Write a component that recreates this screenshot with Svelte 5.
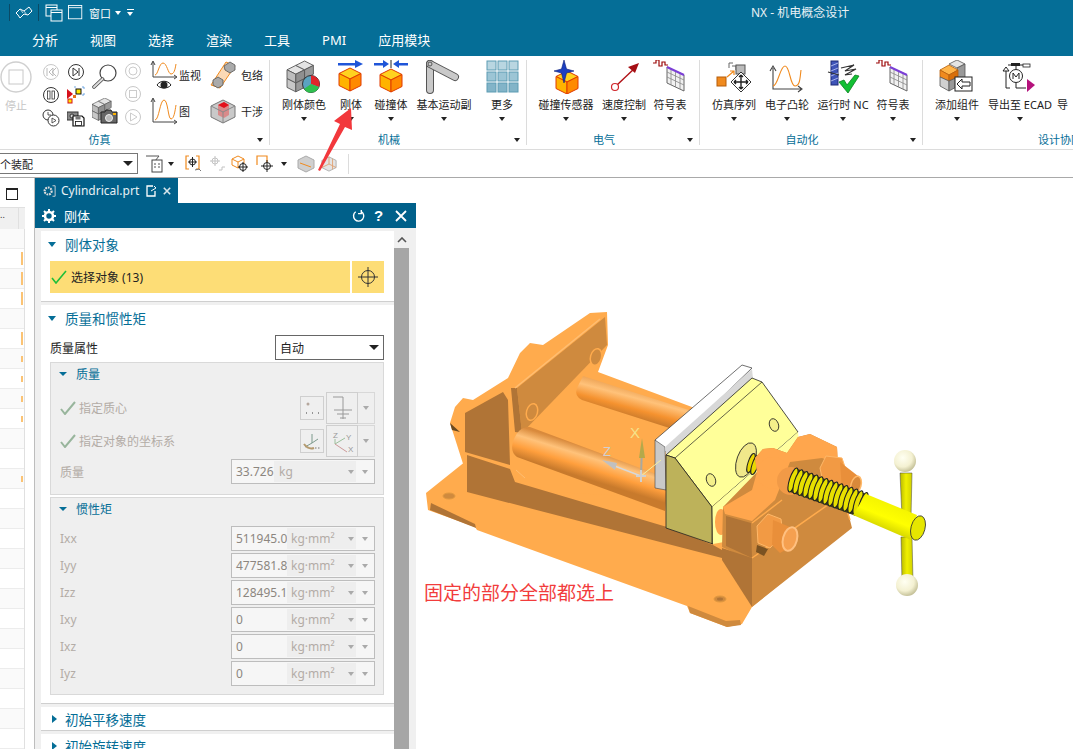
<script>
  const tabs = ['分析', '视图', '选择', '渲染', '工具', 'PMI', '应用模块']

  const groups = [
    { label: '机械', width: 257, pad: 9, items: [
      { label: '刚体颜色', w: 50, icon: 'blockColor' },
      { label: '刚体', w: 44, icon: 'rigid' },
      { label: '碰撞体', w: 36, icon: 'collide' },
      { label: '基本运动副', w: 70, icon: 'joint' },
      { label: '更多', w: 46, icon: 'grid' }
    ] },
    { label: '电气', width: 173, pad: 4, items: [
      { label: '碰撞传感器', w: 70, icon: 'sensor' },
      { label: '速度控制', w: 46, icon: 'speed' },
      { label: '符号表', w: 46, icon: 'table' }
    ] },
    { label: '自动化', width: 223, pad: 4, items: [
      { label: '仿真序列', w: 60, icon: 'sequence' },
      { label: '电子凸轮', w: 46, icon: 'cam' },
      { label: '运行时 NC', w: 66, icon: 'nc' },
      { label: '符号表', w: 34, icon: 'table' }
    ] },
    { label: '设计协同', width: 274, pad: 5, last: true, items: [
      { label: '添加组件', w: 58, icon: 'addPart' },
      { label: '导出至 ECAD', w: 68, icon: 'ecad' },
      { label: '导', w: 30, icon: 'none', plain: true }
    ] }
  ]

  const inertia = [
    { name: 'Ixx', value: '511945.0' },
    { name: 'Iyy', value: '477581.8' },
    { name: 'Izz', value: '128495.1' },
    { name: 'Ixy', value: '0' },
    { name: 'Ixz', value: '0' },
    { name: 'Iyz', value: '0' }
  ]

  // 左侧表格的行，mark 为右端的橙色标记高度
  const rows = [0, 13, 13, 13, 0, 13, 6, 6, 6, 6, 0, 0, 6, 0, 0, 0, 0, 0, 0, 0, 0, 0, 0, 0, 0, 0]

  const threads = Array.from({ length: 15 }, (_, i) => ({ x: 793 + i * 5, y: 480 + i * 1.75 }))
</script>

{#snippet cube(x, y, s)}
  <g transform="translate({x} {y}) scale({s})">
    <path d="M11 0 22 5.500 11 11 0 5.500Z" fill="#ffd21f" stroke="#e03a00" stroke-width="1" />
    <path d="M0 5.500 11 11V23L0 17.500Z" fill="#ffb300" stroke="#e03a00" stroke-width="1" />
    <path d="M22 5.500 11 11V23L22 17.500Z" fill="#ff8a00" stroke="#e03a00" stroke-width="1" />
  </g>
{/snippet}

{#snippet greyBlocks(x, y, s)}
  <g transform="translate({x} {y}) scale({s})" stroke="#555" stroke-width=".8">
    <path d="M0 8 8 4 16 8 8 12Z" fill="#e4e4e4" /><path d="M0 8 8 12V20L0 16Z" fill="#bdbdbd" /><path d="M16 8 8 12V20L16 16Z" fill="#8f8f8f" />
    <path d="M8 4 16 0 24 4 16 8Z" fill="#e4e4e4" /><path d="M24 4 16 8V16L24 12Z" fill="#999" />
    <path d="M0 16 8 20V28L0 24Z" fill="#c8c8c8" /><path d="M16 16 8 20V28L16 24Z" fill="#9a9a9a" />
  </g>
{/snippet}

{#snippet tableIcon()}
  <path d="M1 3H4V0H7V6H10V2H13V5H16" fill="none" stroke="#9c0a0a" stroke-width="1.200" />
  <path d="M15 7 32 15V31L15 23Z" fill="#f1f1f1" stroke="#666" />
  <path d="M19 9V25M23.500 11V27M28 13V29M15 12 32 20M15 17 32 25" stroke="#888" stroke-width=".8" fill="none" />
  <path d="M15 7 32 15" stroke="#7b3fd6" stroke-width="2" />
{/snippet}

{#snippet bigIcon(name)}
  <svg class="big" viewBox="0 0 36 34" width="36" height="34">
    {#if name === 'blockColor'}
      {@render greyBlocks(1, 1, 1.1)}
      <circle cx="25" cy="24" r="8.500" fill="#5ba3c0" stroke="#333" />
      <path d="M25 24V15.500A8.500 8.500 0 0 1 33 27Z" fill="#e0262b" />
      <path d="M25 24 33 27A8.500 8.500 0 0 1 18 29Z" fill="#2fbf4f" />
    {:else if name === 'rigid'}
      <path d="M5 3H22V0L30 4 22 8V5.500H5Z" fill="#1f55d8" />
      {@render cube(6, 8, 1)}
    {:else if name === 'collide'}
      <path d="M1 3H10V0L16 4 10 8V5.500H1ZM35 3H26V0L20 4 26 8V5.500H35Z" fill="#1f55d8" />
      <path d="M18 0V8" stroke="#222" />
      {@render cube(7, 9, 1)}
    {:else if name === 'joint'}
      <path d="M4 4 V30" stroke="#555" stroke-width="8" stroke-linecap="round" />
      <path d="M4 4 V30" stroke="#c9c9c9" stroke-width="6" stroke-linecap="round" />
      <path d="M4 4 29 17" stroke="#555" stroke-width="8" stroke-linecap="round" />
      <path d="M4 4 29 17" stroke="#c9c9c9" stroke-width="6" stroke-linecap="round" />
      <circle cx="4" cy="4" r="2" fill="none" stroke="#555" />
    {:else if name === 'grid'}
      <g stroke="#5d9cb3">
        <rect x="3" y="1" width="9" height="9" fill="#b9d6e1" /><rect x="14" y="1" width="9" height="9" fill="#b9d6e1" /><rect x="25" y="1" width="9" height="9" fill="#b9d6e1" />
        <rect x="3" y="12" width="9" height="9" fill="#9cc5d5" /><rect x="14" y="12" width="9" height="9" fill="#9cc5d5" /><rect x="25" y="12" width="9" height="9" fill="#9cc5d5" />
        <rect x="3" y="23" width="9" height="9" fill="#82b4c8" /><rect x="14" y="23" width="9" height="9" fill="#82b4c8" /><rect x="25" y="23" width="9" height="9" fill="#82b4c8" />
      </g>
    {:else if name === 'sensor'}
      {@render cube(8, 11, 1)}
      <path d="M16 0 18.500 9 26 11 18.500 13 16 23 13.500 13 6 11 13.500 9Z" fill="#1c3fc0" stroke="#0c1f78" stroke-width=".6" />
    {:else if name === 'speed'}
      <path d="M11 25 30 7" stroke="#b01116" stroke-width="1.400" />
      <path d="M33 3 22 7 29 13Z" fill="#a50f14" />
      <circle cx="9" cy="27" r="3.500" fill="#fff" stroke="#d0262b" stroke-width="1.200" />
    {:else if name === 'table'}
      {@render tableIcon()}
    {:else if name === 'sequence'}
      <rect x="1" y="17" width="9" height="9" fill="#f08a1e" stroke="#b55d0a" />
      <path d="M11 17 18 11M14 11H18V15" fill="none" stroke="#f08a1e" stroke-width="1.200" />
      <path d="M13 3H17M13 3V8M16 6H20V10" fill="none" stroke="#666" />
      <rect x="20" y="5" width="9" height="9" fill="#bbb" stroke="#555" />
      <path d="M25 12 35 22 25 32 15 22Z" fill="#fff" stroke="#333" />
      <path d="M25 15V29M18 22H32M25 15 23 17M25 15 27 17M25 29 23 27M25 29 27 27M18 22 20 20M18 22 20 24M32 22 30 20M32 22 30 24" stroke="#222" stroke-width="1.400" fill="none" />
    {:else if name === 'cam'}
      <path d="M4 8V29H32M1 11 4 6 7 11M29 26 33 29 29 32" fill="none" stroke="#444" stroke-width="1.100" />
      <path d="M4 26C9 26 11 6 16 6S21 26 26 26 31 18 32 10" fill="none" stroke="#f08a1e" stroke-width="1.100" />
    {:else if name === 'nc'}
      <rect x="6" y="1" width="7" height="24" fill="#3f54b8" stroke="#1c2a77" />
      <path d="M6 6 13 3M6 11 13 8M6 16 13 13M6 21 13 18" stroke="#a9b5ea" />
      <path d="M16 8 29 5 20 11 31 9 20 15 27 14M3 12 14 15" fill="none" stroke="#333" stroke-width="1.200" />
      <path d="M14 22 19 20 22 25 30 15 34 16 23 33Z" fill="#12c034" stroke="#0b7d20" stroke-width=".8" />
    {:else if name === 'addPart'}
      <g transform="translate(1 0)">
        <path d="M9 4 17 0 25 4 17 8Z" fill="#e4e4e4" stroke="#555" stroke-width=".8" /><path d="M25 4 17 8V22L25 18Z" fill="#999" stroke="#555" stroke-width=".8" />
        <path d="M0 10 9 5 18 10 9 15Z" fill="#ffb54a" stroke="#b55d0a" stroke-width=".8" /><path d="M0 10 9 15V21L0 17Z" fill="#f08a1e" stroke="#b55d0a" stroke-width=".8" /><path d="M18 10 9 15V21L18 17Z" fill="#d86f0a" stroke="#b55d0a" stroke-width=".8" />
        <path d="M0 17 9 21V31L0 26Z" fill="#d0d0d0" stroke="#555" stroke-width=".8" /><path d="M18 17 9 21V31L18 26Z" fill="#999" stroke="#555" stroke-width=".8" />
      </g>
      <rect x="16" y="17" width="17" height="14" fill="#fff" stroke="#222" />
      <path d="M18 24 23 19V22H31V26H23V29Z" fill="#fff" stroke="#222" />
    {:else if name === 'ecad'}
      <path d="M6 5H27" stroke="#222" /><rect x="9" y="3" width="9" height="3" fill="#222" /><rect x="21" y="4" width="7" height="3" fill="#fff" stroke="#222" stroke-width=".8" />
      <path d="M4 7 7 11H1ZM4 11V28M14 5V9M14 23V28M4 28H8M14 28H24" fill="none" stroke="#222" />
      <circle cx="14" cy="16" r="6.500" fill="#fff" stroke="#222" />
      <path d="M11 19V13L14 17 17 13V19" fill="none" stroke="#222" />
      <path d="M25 19 33 25 25 32Z" fill="#b5127c" />
    {/if}
  </svg>
{/snippet}

{#snippet miniCircle(shape)}
  <svg viewBox="0 0 18 18" width="18" height="18">
    <circle cx="9" cy="9" r="7.500" fill="#fff" stroke={shape === 'r' || shape === 'sq' || shape === 'pl' || shape === 'rew' ? '#c8c8c8' : '#333'} />
    {#if shape === 'rew'}
      <path d="M5 5V13M11 5 7 9 11 13ZM14 5 10 9 14 13" fill="none" stroke="#bbb" />
    {:else if shape === 'fwd'}
      <path d="M6 5 11 9 6 13ZM12 5V13" fill="none" stroke="#333" />
    {:else if shape === 'pause'}
      <rect x="5.500" y="5" width="2.500" height="8" fill="#fff" stroke="#333" stroke-width=".8" /><rect x="10" y="5" width="2.500" height="8" fill="#fff" stroke="#333" stroke-width=".8" />
    {:else if shape === 'r'}
      <circle cx="9" cy="9" r="4" fill="none" stroke="#ccc" />
    {:else if shape === 'sq'}
      <rect x="5.500" y="5.500" width="7" height="7" fill="none" stroke="#ccc" />
    {:else if shape === 'pl'}
      <path d="M6.500 5 13 9 6.500 13Z" fill="none" stroke="#ccc" />
    {/if}
  </svg>
{/snippet}

<div class="page">
  <header class="head">
    <div class="quick">
      <span class="vline"></span>
      <svg viewBox="0 0 18 14" width="18" height="14" class="q1">
        <path d="M1 7 5 3 9 5 14 1 17 5 13 9 9 8 5 12 3 9Z" fill="none" stroke="#fff" />
        <path d="M5 3 8 7M9 5 12 9" fill="none" stroke="#dfeef4" stroke-width=".8" />
      </svg>
      <span class="vline v2"></span>
      <svg viewBox="0 0 18 18" width="18" height="18" class="q2">
        <rect x="1" y="1" width="11" height="11" fill="none" stroke="#fff" />
        <rect x="6" y="6" width="11" height="11" fill="#056e97" stroke="#fff" />
        <path d="M1 3.500H12M6 8.500H17" stroke="#fff" />
      </svg>
      <svg viewBox="0 0 18 18" width="16" height="16" class="q3">
        <rect x=".5" y=".5" width="15" height="15" fill="none" stroke="#fff" />
        <path d="M.5 3H15.500" stroke="#fff" />
      </svg>
      <span class="qtext">窗口</span>
      <span class="caret white q4"></span>
      <span class="qmenu"></span>
    </div>
    <div class="title">NX - 机电概念设计</div>
    <nav class="tabs">
      {#each tabs as t}<span>{t}</span>{/each}
    </nav>
  </header>

  <section class="ribbon">
    <div class="group sim">
      <div class="sim-body">
        <div class="stop">
          <svg viewBox="0 0 32 32" width="32" height="32">
            <circle cx="16" cy="16" r="15" fill="#fff" stroke="#cfcfcf" stroke-width="1.400" />
            <rect x="9" y="9" width="14" height="14" fill="#fff" stroke="#c8c8c8" />
          </svg>
          <span>停止</span>
        </div>
        <div class="minis">
          {@render miniCircle('rew')}
          {@render miniCircle('fwd')}
          {@render miniCircle('pause')}
          <svg viewBox="0 0 18 18" width="18" height="18">
            <path d="M0 3 6 8 0 13Z" fill="#d6101c" />
            <rect x="9" y="3" width="5" height="5" fill="#ffe600" stroke="#111" />
            <rect x="1" y="13" width="4" height="4" fill="#ffe600" stroke="#d6101c" />
            <path d="M7 1H9M15 1H17V3M15 9H17V7" fill="none" stroke="#4a90d9" stroke-width=".8" />
            <rect x="6" y="9" width="3" height="3" fill="#e8711a" />
          </svg>
          <svg viewBox="0 0 18 18" width="18" height="18">
            <circle cx="6" cy="6" r="5" fill="#fff" stroke="#333" /><path d="M6 3V6H9" fill="none" stroke="#333" stroke-width=".8" />
            <circle cx="11.500" cy="11.500" r="5.500" fill="#fff" stroke="#333" /><path d="M10 9 14 11.500 10 14Z" fill="#fff" stroke="#333" stroke-width=".8" />
          </svg>
          <svg viewBox="0 0 18 18" width="18" height="18">
            <rect x="0" y="3" width="11" height="8" fill="#888" stroke="#333" /><circle cx="5" cy="7" r="2" fill="#ddd" stroke="#333" />
            <path d="M6 7H15L17 9V17H6Z" fill="#fff" stroke="#111" stroke-width="1.200" /><rect x="8.500" y="7.500" width="5" height="3" fill="#777" /><rect x="8.500" y="12.500" width="6" height="4" fill="#fff" stroke="#111" stroke-width=".8" />
          </svg>
        </div>
        <div class="tools">
          <svg viewBox="0 0 26 28" width="26" height="28">
            <circle cx="16" cy="10" r="8" fill="#fff" stroke="#444" stroke-width="1.200" />
            <path d="M10.500 16 2 24" stroke="#444" stroke-width="3.500" stroke-linecap="round" />
            <path d="M10.500 16 2 24" stroke="#ddd" stroke-width="2" stroke-linecap="round" />
          </svg>
          <svg viewBox="0 0 26 26" width="26" height="26">
            {@render greyBlocks(0, 0, .8)}
            <path d="M9 14H13L14 12H19L20 14H25V25H9Z" fill="#666" stroke="#222" />
            <circle cx="17" cy="20" r="3.500" fill="#bbb" stroke="#eee" />
            <rect x="21" y="15" width="3" height="2" fill="#ffb300" />
          </svg>
        </div>
        <div class="faded">
          {@render miniCircle('r')}
          {@render miniCircle('sq')}
          {@render miniCircle('pl')}
        </div>
        <div class="pairs first">
          <div class="pair">
            <svg viewBox="0 0 28 30" width="28" height="30">
              <path d="M3 2V17H26M1 5 3 1 5 5M24 15 27 17 24 19" fill="none" stroke="#444" />
              <path d="M5 15C8 15 9 3 13 3S18 14 21 14 25 10 26 4" fill="none" stroke="#f08a1e" />
              <path d="M7 25C10 20 18 20 21 25 18 29 10 29 7 25Z" fill="#fff" stroke="#222" /><circle cx="14" cy="25" r="3.500" fill="#222" />
            </svg>
            <span>监视</span>
          </div>
          <div class="pair">
            <svg viewBox="0 0 28 28" width="28" height="28">
              <path d="M3 2V25H26M1 5 3 1 5 5M24 23 27 25 24 27" fill="none" stroke="#444" />
              <path d="M5 23C9 23 10 3 14 3S18 22 21 22 25 14 26 8" fill="none" stroke="#f08a1e" />
            </svg>
            <span>图</span>
          </div>
        </div>
        <div class="pairs second">
          <div class="pair">
            <svg viewBox="0 0 26 28" width="26" height="28">
              <path d="M16 1 25 5 10 27 1 24Z" fill="#fbd9b5" stroke="#f08a1e" />
              <path d="M14 5 20 1 25 4V9L20 12 15 9Z" fill="#aaa" stroke="#555" stroke-width=".8" />
              <path d="M3 19 8 16 13 19V24L8 27 3 24Z" fill="#aaa" stroke="#555" stroke-width=".8" />
            </svg>
            <span>包络</span>
          </div>
          <div class="pair">
            <svg viewBox="0 0 26 26" width="26" height="26">
              <path d="M1 8 13 2 25 8V19L13 25 1 19Z" fill="#c9c9c9" stroke="#777" />
              <path d="M8 7 14 4 19 7V17L14 20 8 17Z" fill="#d98a8a" />
              <path d="M8 7 14 4 19 7 14 10Z" fill="#e3111c" />
              <path d="M1 8 13 14 25 8M13 14V25" fill="none" stroke="#888" />
            </svg>
            <span>干涉</span>
          </div>
        </div>
      </div>
      <div class="glabel simlabel">仿真<span class="corner"></span></div>
    </div>

    {#each groups as g}
      <div class="group" class:last={g.last} style="width:{g.width}px">
        <div class="items" style="padding-left:{g.pad}px">
          {#each g.items as it}
            <div class="item" class:plain={it.plain} style="width:{it.w}px">
              {#if it.icon !== 'none'}{@render bigIcon(it.icon)}{:else}<div class="big-gap"></div>{/if}
              <span class="ilabel">{it.label}</span>
              {#if !it.plain}<span class="caret"></span>{/if}
            </div>
          {/each}
        </div>
        <div class="glabel" class:lastlabel={g.last}>{g.label}{#if !g.last}<span class="corner"></span>{/if}</div>
      </div>
    {/each}
  </section>

  <section class="toolbar">
    <div class="combo"><span>个装配</span><i class="caret wide"></i></div>
    <svg class="t1" viewBox="0 0 18 20" width="18" height="20">
      <path d="M0 2H13L9 7V9" fill="none" stroke="#555" /><rect x="6" y="6" width="10" height="12" fill="#fff" stroke="#444" /><path d="M8 10H10M12 10H14M8 13H10M12 13H14" stroke="#555" />
    </svg>
    <span class="caret t2"></span>
    <svg class="t3" viewBox="0 0 18 20" width="18" height="20">
      <path d="M4 2H1V15H4M11 2H14V15H11" fill="none" stroke="#f08a1e" stroke-width="1.200" />
      <circle cx="7.500" cy="8" r="3" fill="none" stroke="#222" /><path d="M7.500 3V13M3 8H12" stroke="#222" />
      <path d="M10 16 14 15 16 17" fill="none" stroke="#777" />
    </svg>
    <svg class="t4" viewBox="0 0 18 20" width="18" height="20" opacity=".35">
      <circle cx="7" cy="7" r="3" fill="none" stroke="#555" /><path d="M7 2V12M2 7H12M11 16H14V13H17" fill="none" stroke="#555" />
    </svg>
    <svg class="t5" viewBox="0 0 18 20" width="18" height="20">
      <path d="M1 5 7 2 13 5V11L7 14 1 11ZM1 5 7 8 13 5M7 8V14" fill="#fff" stroke="#f08a1e" />
      <circle cx="12" cy="13" r="3.500" fill="#fff" stroke="#222" /><path d="M12 8V18M7 13H17" stroke="#222" />
    </svg>
    <svg class="t6" viewBox="0 0 20 20" width="20" height="20">
      <path d="M1 11V2H11V9" fill="none" stroke="#f08a1e" stroke-width="1.200" />
      <circle cx="11" cy="12" r="3.500" fill="none" stroke="#222" /><path d="M11 6V18M5 12H17" stroke="#222" />
    </svg>
    <span class="caret t7"></span>
    <svg class="t8" viewBox="0 0 18 18" width="18" height="18">
      <path d="M1 5 9 1 17 5V13L9 17 1 13Z" fill="#cfcfcf" stroke="#aaa" /><path d="M3 8 14 12" stroke="#f08a1e" />
    </svg>
    <svg class="t9" viewBox="0 0 18 18" width="16" height="16">
      <path d="M1 5 9 1 17 5V13L9 17 1 13Z" fill="#e4e4e4" stroke="#aaa" /><path d="M9 1V9L17 13M9 9 1 13M13 3V15" fill="none" stroke="#e0a070" />
    </svg>
    <span class="tsep"></span>
  </section>

  <section class="tabrow">
    <div class="tabspace"></div>
    <div class="doc">
      <svg viewBox="0 0 16 16" width="14" height="14">
        <circle cx="7" cy="8" r="4" fill="none" stroke="#ddd" stroke-width="2.500" stroke-dasharray="2 1" />
        <path d="M12 2H15V14H12" fill="none" stroke="#ddd" />
      </svg>
      <span class="docname">Cylindrical.prt</span>
      <svg viewBox="0 0 12 12" width="12" height="12">
        <path d="M9 6V11H1V1H7" fill="none" stroke="#fff" stroke-width="1.300" /><path d="M5 6 10 3 8 1" fill="none" stroke="#fff" />
      </svg>
      <svg viewBox="0 0 10 10" width="8" height="8"><path d="M1 1 9 9M9 1 1 9" stroke="#d8e6ec" stroke-width="2" /></svg>
    </div>
  </section>

  <main class="work">
    <aside class="side">
      <div class="wicon"></div>
      <div class="list">
        <div class="lhead"><span>..</span></div>
        {#each rows as m}
          <div class="lrow"><i class="mark" style="height:{m}px"></i></div>
        {/each}
      </div>
    </aside>

    <div class="panel">
      <div class="ptitle">
        <svg viewBox="0 0 14 14" width="14" height="14">
          <circle cx="7" cy="7" r="4" fill="none" stroke="#fff" stroke-width="2.600" />
          <path d="M7 0V3M7 11V14M0 7H3M11 7H14M2 2 4 4M10 10 12 12M12 2 10 4M4 10 2 12" stroke="#fff" stroke-width="2" />
        </svg>
        <span class="ptext">刚体</span>
        <svg class="pa" viewBox="0 0 14 14" width="13" height="13"><path d="M4 3A5.500 5.500 0 1 0 10 2.800M10 1V5H6.500" fill="none" stroke="#fff" stroke-width="1.500" /></svg>
        <span class="pq">?</span>
        <svg class="px" viewBox="0 0 12 12" width="12" height="12"><path d="M1 1 11 11M11 1 1 11" stroke="#fff" stroke-width="1.800" /></svg>
      </div>
      <div class="pbody">
        <div class="pcontent">
          <div class="sect s1">
            <h3><i class="tri down"></i>刚体对象</h3>
            <div class="pick">
              <div class="pickmain">
                <svg viewBox="0 0 16 14" width="16" height="14"><path d="M1 8 5 13 15 1" fill="none" stroke="#1fbf3a" stroke-width="1.600" /></svg>
                <span>选择对象 (13)</span>
              </div>
              <div class="pickbtn">
                <svg viewBox="0 0 22 22" width="22" height="22"><circle cx="11" cy="11" r="6.500" fill="none" stroke="#333" /><path d="M11 1V21M1 11H21" stroke="#333" /></svg>
              </div>
            </div>
          </div>

          <div class="sect s2">
            <h3><i class="tri down"></i>质量和惯性矩</h3>
            <div class="prop">
              <span>质量属性</span>
              <div class="select"><span>自动</span><i class="caret wide"></i></div>
            </div>

            <div class="sub mass">
              <h4><i class="tri down small"></i>质量</h4>
              <div class="spec first">
                <svg viewBox="0 0 16 14" width="16" height="14"><path d="M1 8 5 13 15 1" fill="none" stroke="#98b59c" stroke-width="2" /></svg>
                <span class="muted">指定质心</span>
                <div class="sbtn">
                  <svg viewBox="0 0 20 20" width="20" height="20"><circle cx="6" cy="6" r="1.500" fill="#b5a79d" /><path d="M4 15H5M10 15H11M16 15H17" stroke="#777" stroke-width="1.400" /></svg>
                </div>
                <div class="lbtn">
                  <svg viewBox="0 0 26 26" width="26" height="26"><path d="M14 2H4M14 2V24M5 15H23M8 19H20M11 23H17" fill="none" stroke="#999" /></svg>
                </div>
                <div class="abtn"><i class="caret grey"></i></div>
              </div>
              <div class="spec">
                <svg viewBox="0 0 16 14" width="16" height="14"><path d="M1 8 5 13 15 1" fill="none" stroke="#98b59c" stroke-width="2" /></svg>
                <span class="muted">指定对象的坐标系</span>
                <div class="sbtn">
                  <svg viewBox="0 0 20 20" width="20" height="20"><path d="M10 12V3M10 12 3 16M10 12 16 8" stroke="#7c9a8c" fill="none" /><path d="M2 13C5 17 9 18 12 17" stroke="#b59a6e" stroke-width="2" fill="none" /><path d="M13 17H18" stroke="#777" stroke-dasharray="1.500 1.500" /></svg>
                </div>
                <div class="lbtn">
                  <svg viewBox="0 0 28 28" width="28" height="28">
                    <text x="5" y="11" class="axis">Z</text><text x="18" y="13" class="axis">Y</text><text x="20" y="25" class="axis">X</text>
                    <path d="M7 17V12M7 17 17 11" stroke="#9cc09c" fill="none" /><path d="M7 17 19 25" stroke="#c99" fill="none" />
                  </svg>
                </div>
                <div class="abtn"><i class="caret grey"></i></div>
              </div>
              <div class="numrow">
                <span class="muted">质量</span>
                <div class="num">
                  <span class="val short">33.726</span>
                  <span class="unit u2">kg<i class="caret grey"></i></span>
                  <i class="caret grey"></i>
                </div>
              </div>
            </div>

            <div class="sub inertia">
              <h4><i class="tri down small"></i>惯性矩</h4>
              <div class="nums">
                {#each inertia as r}
                  <div class="numrow">
                    <span class="muted">{r.name}</span>
                    <div class="num">
                      <span class="val">{r.value}</span>
                      <span class="unit">kg·mm²<i class="caret grey"></i></span>
                      <i class="caret grey"></i>
                    </div>
                  </div>
                {/each}
              </div>
            </div>
          </div>

          <div class="sect closed"><h3><i class="tri right"></i>初始平移速度</h3></div>
          <div class="sect closed"><h3><i class="tri right"></i>初始旋转速度</h3></div>
        </div>
        <div class="scroll">
          <div class="up"><svg viewBox="0 0 10 6" width="10" height="6"><path d="M1 5 5 1 9 5" fill="none" stroke="#555" stroke-width="1.600" /></svg></div>
          <div class="thumb"></div>
        </div>
      </div>
    </div>

    <div class="view">
      <svg viewBox="416 203 657 546" width="657" height="546">
        <defs>
          <linearGradient id="rodA" gradientUnits="userSpaceOnUse" x1="593" y1="449" x2="584" y2="478">
            <stop offset="0" stop-color="#d98a3c" /><stop offset=".3" stop-color="#ffc27a" /><stop offset=".65" stop-color="#ff9f3d" /><stop offset="1" stop-color="#c87a2c" />
          </linearGradient>
          <linearGradient id="rodB" gradientUnits="userSpaceOnUse" x1="640" y1="388" x2="632" y2="418">
            <stop offset="0" stop-color="#e89a4a" /><stop offset=".35" stop-color="#ffc27a" /><stop offset=".7" stop-color="#f5922f" /><stop offset="1" stop-color="#c87a2c" />
          </linearGradient>
          <linearGradient id="shaft" gradientUnits="userSpaceOnUse" x1="890" y1="503" x2="880" y2="528">
            <stop offset="0" stop-color="#f4f400" /><stop offset=".55" stop-color="#ffff00" /><stop offset="1" stop-color="#d6d600" />
          </linearGradient>
          <linearGradient id="bar" x1="0" y1="0" x2="1" y2="0">
            <stop offset="0" stop-color="#b8b800" /><stop offset=".5" stop-color="#f0f000" /><stop offset="1" stop-color="#d0d000" />
          </linearGradient>
          <radialGradient id="ball" cx=".4" cy=".35" r=".7">
            <stop offset="0" stop-color="#fffff2" /><stop offset=".6" stop-color="#f4f1d2" /><stop offset="1" stop-color="#bdb98f" />
          </radialGradient>
        </defs>

        <!-- 底板 -->
        <path d="M426 493 466 461 700 480 850 527 752 607 742 624 727 627 690 613 687 606 477 530 475 527 428 510Z" fill="#ffab4d" />
        <path d="M431 503 475 524 476 528 430 510Z" fill="#b07436" />
        <path d="M688 606 726 621 740 620 741 625 727 627 690 613Z" fill="#cf8a3e" />
        <ellipse cx="449" cy="496" rx="6" ry="3" fill="#cf8a3e" stroke="#e0983f" />
        <ellipse cx="720" cy="599" rx="6" ry="3" fill="#cf8a3e" stroke="#e0983f" />
        <ellipse cx="720" cy="599" rx="3" ry="1.500" fill="#b07436" />

        <!-- 后端块 -->
        <path d="M450 423 455 407 463 398 473 400 508 378 520 353 530 343 543 345 590 313 607 312 608 345 598 372 700 410 700 500 516 490 465 470Z" fill="#ffab4d" />
        <path d="M452 430 450 423 460 432Z" fill="#6b4a20" />
        <path d="M465 413 503 392 508 400 510 465 465 452Z" fill="#b07436" />
        <path d="M467 455 510 469 515 482 667 527 713 545 722 550 722 558 467 492Z" fill="#b07436" />
        <path d="M517 388 605 317 607 345 522 433Z" fill="#cf8a3e" />
        <path d="M511 388 517 388 522 433 515 432Z" fill="#b07436" />
        <path d="M515 388 600 319" stroke="#ffbe72" stroke-width="1.500" />
        <ellipse cx="596" cy="357" rx="5.500" ry="8.500" transform="rotate(15 596 357)" fill="#cf8a3e" stroke="#ffab4d" stroke-width="1.500" />
        <ellipse cx="532" cy="412" rx="5.500" ry="8.500" transform="rotate(15 532 412)" fill="#cf8a3e" stroke="#ffab4d" stroke-width="1.500" />

        <!-- 导杆 -->
        <path d="M583 376 692 411 682 432 582 400Q574 396 577 388Z" fill="url(#rodB)" />
        <path d="M530 427 667 478 665 511 517 457Q510 452 513 442Q518 426 530 427Z" fill="url(#rodA)" />
        <path d="M516 470 525 478" stroke="#ffbe72" />

        <!-- 钳口 -->
        <path d="M655 440 742 365 752 368 665 452Z" fill="#fff" stroke="#333" stroke-width=".7" />
        <path d="M655 440 665 447 666 490 655 488Z" fill="#c9c9c9" stroke="#444" stroke-width=".6" />
        <path d="M665 447 752 369 753 379 666 456Z" fill="#d8d8d8" />
        <path d="M666 455 752 378 762 382 798 432 712 507 675 458Z" fill="#ffff99" stroke="#222" stroke-width=".8" />
        <path d="M675 458 762 382" stroke="#222" stroke-width=".7" />
        <path d="M666 455 675 458 712 507 713 544 666 528Z" fill="#bdb25a" stroke="#222" stroke-width=".8" />
        <path d="M712 507 798 432 800 450 735 540 713 544Z" fill="#ffff9e" />
        <path d="M712 507V544" stroke="#222" stroke-width=".8" />
        <ellipse cx="774" cy="425" rx="4.500" ry="6.500" transform="rotate(-20 774 425)" fill="#f4f08a" stroke="#222" stroke-width=".8" />
        <ellipse cx="711" cy="480" rx="4.500" ry="6.500" transform="rotate(-20 711 480)" fill="#f4f08a" stroke="#222" stroke-width=".8" />
        <ellipse cx="746" cy="460" rx="9" ry="18" transform="rotate(20 746 460)" fill="#f0e88a" stroke="#222" stroke-width=".8" />
        <ellipse cx="751" cy="463" rx="3" ry="10" transform="rotate(18 751 463)" fill="#e8d800" stroke="#222" />
        <ellipse cx="755" cy="465" rx="3" ry="10" transform="rotate(18 755 465)" fill="#e8d800" stroke="#222" />
        <ellipse cx="721" cy="522" rx="6" ry="13" fill="#ffa64d" />

        <!-- 前端块 -->
        <path d="M723 507 757 472 755 458 763 449 773 448 787 453 798 437 810 434 837 447 838 470 850 520 852 528 752 607 750 560 722 547Z" fill="#cf8a3e" />
        <path d="M723 507 752 490 757 472 755 458 763 449 773 448 787 453 798 437 810 434 837 447 838 464 822 458 790 462 775 500 752 521 725 514Z" fill="#ffa64d" />
        <path d="M726 516 751 523 752 558 726 546Z" fill="#b07436" />
        <path d="M722 548 752 558 752 607 722 560Z" fill="#b07436" />
        <path d="M752 523 782 500M752 558 842 495 850 520" stroke="#ffab4d" stroke-width="1.500" fill="none" />
        <circle cx="773" cy="473" r="16" fill="#ffa64d" />
        <circle cx="791" cy="481" r="14" fill="#f19a47" />

        <!-- 螺母 -->
        <path d="M820 468 826 456 842 458 848 476 838 490 824 487Z" fill="#f29a44" stroke="#ffb868" />
        <path d="M840 462 858 476 856 494 842 490Z" fill="#e98f3a" />
        <ellipse cx="856" cy="485" rx="5" ry="9" transform="rotate(15 856 485)" fill="#d9893a" stroke="#ffb868" stroke-width="1.500" />
        <path d="M757 526 768 514 781 519 783 535 770 548 758 543Z" fill="#f29a44" stroke="#ffb868" />
        <path d="M773 520 790 527 794 545 780 553 772 545Z" fill="#e98f3a" />
        <ellipse cx="790" cy="539" rx="7" ry="12" transform="rotate(15 790 539)" fill="#f5a050" stroke="#ffc080" stroke-width="2" />
        <path d="M757 545 768 549 764 556 756 552Z" fill="#7a5222" />

        <!-- 丝杠 -->
        <path d="M795 468 866 494 856 516 790 492Z" fill="#3a3a1a" />
        {#each threads as t}
          <ellipse cx={t.x} cy={t.y} rx="3.500" ry="12.500" transform="rotate(18 {t.x} {t.y})" fill="#e8e000" stroke="#222" stroke-width="1.100" />
        {/each}
        <path d="M900 473H912L911 517H902Z" fill="url(#bar)" stroke="#444" stroke-width=".5" />
        <path d="M901 537H912L913 582H902Z" fill="url(#bar)" stroke="#444" stroke-width=".5" />
        <path d="M866 494 917 515 911 540 853 515Z" fill="url(#shaft)" />
        <ellipse cx="918" cy="528" rx="7" ry="12.500" transform="rotate(15 918 528)" fill="#e6e600" stroke="#333" stroke-width=".8" />
        <circle cx="905" cy="461" r="11" fill="url(#ball)" />
        <circle cx="907" cy="585" r="11" fill="url(#ball)" />

        <!-- 坐标轴 -->
        <path d="M641 476 642 446" stroke="#a9a9a0" stroke-width="2" />
        <path d="M642 438 645 458 639 458Z" fill="#b5a94a" />
        <path d="M641 476 612 465" stroke="#d8d8d8" stroke-width="1.500" />
        <path d="M602 460 617 463 615 470Z" fill="#c0c0c0" />
        <path d="M641 476 661 460" stroke="#f4f0a0" />
        <path d="M641 470V482M636 476H646" stroke="#d0d0d0" stroke-width="2" />
        <text x="630" y="438" class="tx">X</text>
        <text x="603" y="456" class="tz">Z</text>
      </svg>
      <div class="note">固定的部分全部都选上</div>
    </div>
  </main>

  <svg class="callout" viewBox="0 0 40 70" width="40" height="70">
    <path d="M4 65 26 19 20 16 37 3 38 25 31 22 6 66Z" fill="#f2383c" />
  </svg>
</div>

<style>
  :global(body) {
    margin: 0;
    background: #fff;
  }

  .page {
    position: relative;
    width: 1073px;
    height: 749px;
    overflow: hidden;
    display: flex;
    flex-direction: column;
    font-family: "Noto Sans", "Noto Sans CJK SC", sans-serif;
    color: #222;
    background: #fff;
  }

  .head {
    position: relative;
    height: 56px;
    flex: none;
    background: #056e97;
    color: #fff;
  }

  .quick {
    display: flex;
    align-items: center;
    height: 25px;
    font-size: 11px;
  }

  .vline {
    width: 1px;
    height: 17px;
    margin-left: 9px;
    background: #0a4a66;
  }

  .q1 {
    margin-left: 5px;
  }

  .vline.v2 {
    margin-left: 5px;
  }

  .q2 {
    margin-left: 6px;
  }

  .q3 {
    margin-left: 5px;
  }

  .qtext {
    margin-left: 5px;
  }

  .q4 {
    margin-left: 4px;
  }

  .qmenu {
    width: 7px;
    height: 1px;
    margin-left: 6px;
    border-top: 1px solid #fff;
    position: relative;
    top: -3px;
  }

  .qmenu::after {
    content: '';
    position: absolute;
    left: 0;
    top: 2px;
    border: 3.5px solid transparent;
    border-top: 4px solid #fff;
    border-bottom: 0;
  }

  .title {
    position: absolute;
    left: 751px;
    top: 4px;
    font-size: 12px;
    line-height: 18px;
    color: #e8f1f5;
  }

  .tabs {
    display: flex;
    gap: 32px;
    padding-left: 32px;
    font-size: 13px;
    line-height: 31px;
  }

  .ribbon {
    display: flex;
    height: 94px;
    flex: none;
    padding-top: 4px;
    box-sizing: border-box;
    border-bottom: 1px solid #dcdcdc;
    overflow: hidden;
  }

  .group {
    position: relative;
    flex: none;
    box-sizing: border-box;
    border-right: 1px solid #dcdcdc;
    height: 85px;
  }

  .group.sim {
    width: 270px;
  }

  .group.last {
    border-right: 0;
  }

  .sim-body {
    display: flex;
    height: 71px;
  }

  .stop {
    width: 32px;
    flex: none;
    display: flex;
    flex-direction: column;
    align-items: center;
    margin-top: 1px;
    font-size: 11px;
    color: #c6c6c6;
  }

  .stop span {
    margin-top: 4px;
  }

  .minis {
    display: grid;
    flex: none;
    grid-template-columns: 25px 25px;
    grid-auto-rows: 23px;
    margin-left: 6px;
    align-items: center;
    justify-items: center;
    width: 50px;
    height: 69px;
  }

  .tools {
    width: 32px;
    flex: none;
    margin-left: 1px;
    display: flex;
    flex-direction: column;
    align-items: center;
    gap: 7px;
    padding-top: 3px;
  }

  .faded {
    flex: none;
    margin-left: 3px;
    width: 18px;
    display: flex;
    flex-direction: column;
    gap: 5px;
    padding-top: 2px;
  }

  .pairs {
    flex: none;
    display: flex;
    flex-direction: column;
    gap: 6px;
    font-size: 11px;
    white-space: nowrap;
  }

  .pairs.first {
    margin-left: 8px;
    width: 60px;
  }

  .pair {
    display: flex;
    align-items: center;
    gap: 1px;
    height: 30px;
  }

  .pairs.second .pair {
    gap: 5px;
  }

  .items {
    display: flex;
    height: 71px;
  }

  .item {
    flex: none;
    display: flex;
    flex-direction: column;
    align-items: center;
    font-size: 11px;
    white-space: nowrap;
  }

  .item.plain {
    align-items: flex-start;
    padding-left: 3px;
  }

  .big {
    display: block;
    flex: none;
  }

  .big-gap {
    height: 34px;
    flex: none;
  }

  .ilabel {
    line-height: 15px;
    margin-top: 3px;
  }

  .item .caret {
    margin-top: 5px;
  }

  .caret {
    display: inline-block;
    flex: none;
    width: 0;
    height: 0;
    border-left: 3.5px solid transparent;
    border-right: 3.5px solid transparent;
    border-top: 4px solid #222;
  }

  .caret.wide {
    border-left-width: 5px;
    border-right-width: 5px;
    border-top-width: 5px;
  }

  .caret.white {
    border-top-color: #fff;
  }

  .caret.grey {
    border-top-color: #aaa;
  }

  .glabel {
    position: absolute;
    left: 0;
    right: 0;
    top: 72px;
    box-sizing: border-box;
    padding-right: 18px;
    text-align: center;
    font-size: 11px;
    line-height: 15px;
    color: #056e97;
  }

  .glabel.simlabel {
    padding-right: 70px;
  }

  .glabel.lastlabel {
    padding-right: 0;
  }

  .corner {
    position: absolute;
    right: 6px;
    top: 6px;
    border-left: 3.5px solid transparent;
    border-right: 3.5px solid transparent;
    border-top: 4px solid #222;
  }

  .toolbar {
    display: flex;
    align-items: center;
    height: 27px;
    flex: none;
    border-bottom: 1px solid #a9a9a9;
  }

  .combo {
    width: 138px;
    height: 21px;
    flex: none;
    display: flex;
    align-items: center;
    justify-content: space-between;
    box-sizing: border-box;
    border: 1px solid #777;
    border-left: 0;
    padding-right: 4px;
    font-size: 11px;
  }

  .t1 {
    margin-left: 8px;
  }

  .t2 {
    margin-left: 4px;
  }

  .t3 {
    margin-left: 11px;
  }

  .t4 {
    margin-left: 5px;
  }

  .t5 {
    margin-left: 5px;
  }

  .t6 {
    margin-left: 7px;
  }

  .t7 {
    margin-left: 5px;
  }

  .t8 {
    margin-left: 10px;
  }

  .t9 {
    margin-left: 6px;
  }

  .tsep {
    width: 1px;
    height: 20px;
    margin-left: 11px;
    background: #dcdcdc;
  }

  .tabrow {
    display: flex;
    height: 25px;
    flex: none;
  }

  .tabspace {
    width: 35px;
    flex: none;
  }

  .doc {
    width: 143px;
    display: flex;
    align-items: center;
    gap: 5px;
    box-sizing: border-box;
    padding-left: 7px;
    background: #00608a;
    color: #e8f1f5;
    font-size: 12px;
  }

  .docname {
    margin-right: 2px;
  }

  .work {
    flex: 1;
    display: flex;
    min-height: 0;
  }

  .side {
    width: 34px;
    flex: none;
    border-right: 1px solid #bdbdbd;
    margin-top: -25px;
    position: relative;
    overflow: hidden;
  }

  .wicon {
    width: 10px;
    height: 9px;
    margin: 10px 0 0 6px;
    border: 1px solid #222;
    border-top-width: 2px;
  }

  .list {
    width: 25px;
    margin-top: 7px;
    border: 1px solid #e0e0e0;
    border-left: 0;
    box-sizing: border-box;
  }

  .lhead {
    height: 21px;
    background: #f0f0f0;
    border-right: 1px solid #e0e0e0;
    width: 18px;
    font-size: 9px;
    line-height: 14px;
    color: #333;
    box-shadow: 6px 0 0 #f0f0f0;
  }

  .lrow {
    height: 20px;
    box-sizing: border-box;
    border-bottom: 1px solid #ececec;
    display: flex;
    justify-content: flex-end;
    align-items: center;
  }

  .lrow:nth-child(even) {
    background: #fafafa;
  }

  .mark {
    width: 2px;
    background: #fbc374;
    margin-right: 1px;
  }

  .panel {
    width: 381px;
    flex: none;
    display: flex;
    flex-direction: column;
    background: #f0f0f0;
  }

  .ptitle {
    height: 25px;
    flex: none;
    display: flex;
    align-items: center;
    padding-left: 7px;
    background: #00608a;
    color: #fff;
  }

  .ptext {
    margin-left: 8px;
    font-size: 13px;
  }

  .pa {
    margin-left: 262px;
  }

  .pq {
    margin-left: 9px;
    width: 10px;
    font: 700 15px "Liberation Sans", sans-serif;
  }

  .px {
    margin-left: 11px;
  }

  .pbody {
    flex: 1;
    min-height: 0;
    display: flex;
    padding: 3px 6px 0;
    overflow: hidden;
  }

  .pcontent {
    width: 353px;
    flex: none;
  }

  .scroll {
    width: 15px;
    flex: none;
    display: flex;
    flex-direction: column;
    background: #f0f0f0;
  }

  .up {
    height: 17px;
    display: flex;
    align-items: center;
    justify-content: center;
  }

  .thumb {
    flex: 1;
    background: #a6a6a6;
  }

  .sect {
    background: #fff;
    border-bottom: 1px solid #cfcfcf;
    margin-bottom: 3px;
    box-sizing: border-box;
  }

  h3 {
    display: flex;
    align-items: center;
    margin: 0;
    height: 26px;
    padding-left: 7px;
    font-size: 13.5px;
    font-weight: 400;
    color: #056e97;
  }

  h4 {
    display: flex;
    align-items: center;
    margin: 0;
    height: 22px;
    padding-left: 8px;
    font-size: 12px;
    font-weight: 400;
    color: #056e97;
  }

  .tri {
    flex: none;
    width: 0;
    height: 0;
    margin-right: 9px;
  }

  .tri.down {
    border-left: 4.5px solid transparent;
    border-right: 4.5px solid transparent;
    border-top: 5px solid #056e97;
  }

  .tri.small {
    border-left-width: 4px;
    border-right-width: 4px;
    border-top-width: 4px;
  }

  .tri.right {
    margin-left: 4px;
    margin-right: 8px;
    border-top: 4.5px solid transparent;
    border-bottom: 4.5px solid transparent;
    border-left: 5px solid #056e97;
  }

  .s1 {
    height: 71px;
  }

  .s2 {
    height: 399px;
  }

  .closed {
    height: 24px;
  }

  .closed h3 {
    height: 24px;
  }

  .pick {
    display: flex;
    gap: 2px;
    margin: 4px 0 0 9px;
    height: 32px;
  }

  .pickmain {
    width: 300px;
    display: flex;
    align-items: center;
    gap: 4px;
    padding-left: 1px;
    box-sizing: border-box;
    background: #fddd76;
    font-size: 12px;
  }

  .pickbtn {
    width: 32px;
    display: flex;
    align-items: center;
    justify-content: center;
    background: #fddd76;
  }

  .prop {
    display: flex;
    align-items: center;
    justify-content: space-between;
    margin: 4px 0 2px 9px;
    width: 334px;
    height: 25px;
    font-size: 12px;
  }

  .select {
    width: 109px;
    height: 25px;
    box-sizing: border-box;
    display: flex;
    align-items: center;
    justify-content: space-between;
    padding: 0 4px;
    border: 1px solid #666;
    font-size: 12px;
  }

  .sub {
    width: 334px;
    margin-left: 9px;
    box-sizing: border-box;
    border: 1px solid #d9d9d9;
    background: #efefef;
  }

  .mass {
    height: 133px;
    margin-bottom: 2px;
  }

  .inertia {
    height: 198px;
  }

  .spec {
    display: flex;
    align-items: center;
    height: 33px;
    padding-left: 9px;
  }

  .spec.first {
    margin-top: 6px;
  }

  .muted {
    color: #b3aca6;
    font-size: 12px;
  }

  .spec .muted {
    margin-left: 3px;
    flex: 1;
  }

  .sbtn {
    width: 24px;
    height: 24px;
    box-sizing: border-box;
    border: 1px solid #cfcfcf;
    display: flex;
    align-items: center;
    justify-content: center;
  }

  .lbtn {
    width: 32px;
    height: 32px;
    margin-left: 2px;
    box-sizing: border-box;
    border: 1px solid #cfcfcf;
    display: flex;
    align-items: center;
    justify-content: center;
  }

  .abtn {
    width: 17px;
    height: 32px;
    margin-right: 8px;
    box-sizing: border-box;
    border: 1px solid #d8d8d8;
    border-left: 0;
    display: flex;
    align-items: center;
    justify-content: center;
  }

  .axis {
    font: 8px "Liberation Sans", sans-serif;
    fill: #999;
  }

  .numrow {
    display: flex;
    align-items: center;
    justify-content: space-between;
    height: 27px;
    padding: 0 8px 0 9px;
  }

  .mass .numrow {
    margin-top: 1px;
  }

  .num {
    width: 144px;
    height: 25px;
    box-sizing: border-box;
    display: flex;
    align-items: center;
    border: 1px solid #bdbdbd;
    background: #f6f6f6;
    font-size: 12px;
    white-space: nowrap;
  }

  .val {
    flex: none;
    width: 55px;
    padding-left: 4px;
    box-sizing: border-box;
    overflow: hidden;
    color: #8c8680;
  }

  .val.short {
    width: 42px;
  }

  .unit {
    flex: none;
    width: 69px;
    height: 21px;
    display: flex;
    align-items: center;
    justify-content: space-between;
    box-sizing: border-box;
    padding: 0 2px 0 4px;
    background: #eee;
    color: #b3aca6;
  }

  .unit.u2 {
    width: 82px;
    padding-left: 5px;
  }

  .num > .caret {
    margin-left: 6px;
  }

  .nums {
    margin-top: 5px;
  }

  .view {
    position: relative;
    flex: 1;
    min-width: 0;
    overflow: hidden;
  }

  .view svg {
    display: block;
  }

  .tx {
    font: 15px "Liberation Sans", sans-serif;
    fill: #f5e28a;
  }

  .tz {
    font: 13px "Liberation Sans", sans-serif;
    fill: #d0d0d0;
  }

  .note {
    position: absolute;
    left: 8px;
    top: 376px;
    font-size: 19px;
    line-height: 28px;
    color: #f23c3c;
    white-space: nowrap;
  }

  .callout {
    position: absolute;
    left: 314px;
    top: 105px;
  }
</style>
